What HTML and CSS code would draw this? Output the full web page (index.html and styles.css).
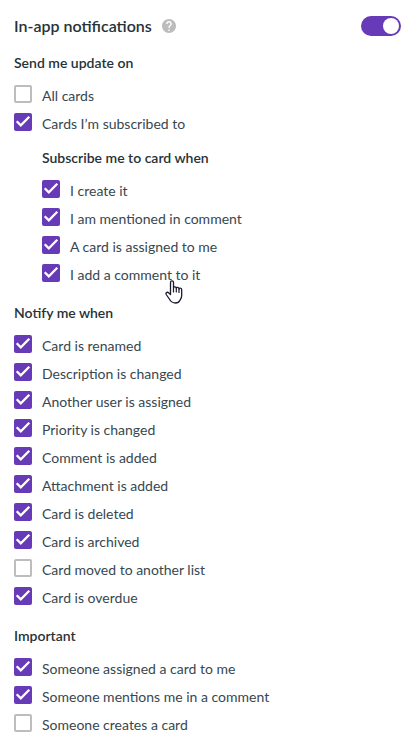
FILE: index.html
```html
<!DOCTYPE html>
<html lang="en">
<head>
    <meta charset="UTF-8">
    <meta name="viewport" content="width=device-width, initial-scale=1.0">
    <title>In-app notifications</title>
    <link rel="stylesheet" href="styles.css">
</head>
<body>
    <form class="settings">
        <div class="header">
            <h1><label for="inApp">In-app notifications</label></h1>
            <button type="button" class="help" aria-label="Help">
                <svg width="14" height="14" viewBox="2 2 20 20">
                    <path fill="currentColor" d="M12 2C6.48 2 2 6.48 2 12s4.48 10 10 10 10-4.48 10-10S17.52 2 12 2zm1 17h-2v-2h2v2zm2.07-7.75l-.9.92C13.45 12.9 13 13.5 13 15h-2v-.5c0-1.1.45-2.1 1.17-2.83l1.24-1.26c.37-.36.59-.86.59-1.41 0-1.1-.9-2-2-2s-2 .9-2 2H8c0-2.21 1.79-4 4-4s4 1.79 4 4c0 .88-.36 1.68-.93 2.25z"/>
                </svg>
            </button>
            <input type="checkbox" role="switch" class="switch" id="inApp" checked>
        </div>

        <section>
            <h2>Send me update on</h2>
            <label class="option"><input type="checkbox"><span>All cards</span></label>
            <label class="option"><input type="checkbox" checked><span>Cards I’m subscribed to</span></label>

            <div class="nested">
                <h2>Subscribe me to card when</h2>
                <label class="option"><input type="checkbox" checked><span>I create it</span></label>
                <label class="option"><input type="checkbox" checked><span>I am mentioned in comment</span></label>
                <label class="option"><input type="checkbox" checked><span>A card is assigned to me</span></label>
                <label class="option hovered">
                    <input type="checkbox" checked><span>I add a comment to it</span>
                    <svg class="cursor" width="18" height="24" viewBox="0 0 18 24">
                        <path fill="#fff" stroke="#1b1b2b" stroke-width="1.3" stroke-linejoin="round" d="M5.5 14.5V2.5C5.5 .4 8.500 .4 8.500 2.500V8C8.500 6.300 11.300 6.400 11.300 8.300C11.300 6.900 14 7 14 8.900C14 7.700 16.700 7.800 16.700 9.800V15.500C16.700 18 15.500 19 14.800 20.500C14 22.300 12.500 23 10.500 23C7.500 23 6 21.800 4.700 19.500L1.200 14.500C.3 12.900 2.200 11.600 3.600 12.800Z"/>
                        <path fill="none" stroke="#1b1b2b" stroke-width="1.2" stroke-linecap="round" d="M8.5 8V12M11.3 8.5V12M14 9.2V12.5"/>
                    </svg>
                </label>
            </div>
        </section>

        <section>
            <h2>Notify me when</h2>
            <label class="option"><input type="checkbox" checked><span>Card is renamed</span></label>
            <label class="option"><input type="checkbox" checked><span>Description is changed</span></label>
            <label class="option"><input type="checkbox" checked><span>Another user is assigned</span></label>
            <label class="option"><input type="checkbox" checked><span>Priority is changed</span></label>
            <label class="option"><input type="checkbox" checked><span>Comment is added</span></label>
            <label class="option"><input type="checkbox" checked><span>Attachment is added</span></label>
            <label class="option"><input type="checkbox" checked><span>Card is deleted</span></label>
            <label class="option"><input type="checkbox" checked><span>Card is archived</span></label>
            <label class="option"><input type="checkbox"><span>Card moved to another list</span></label>
            <label class="option"><input type="checkbox" checked><span>Card is overdue</span></label>
        </section>

        <section>
            <h2>Important</h2>
            <label class="option"><input type="checkbox" checked><span>Someone assigned a card to me</span></label>
            <label class="option"><input type="checkbox" checked><span>Someone mentions me in a comment</span></label>
            <label class="option"><input type="checkbox"><span>Someone creates a card</span></label>
        </section>
    </form>
</body>
</html>
```
FILE: styles.css
```css
body {
    margin: 0;
    background-color: #fff;
    color: #263238;
    font-family: Lato, sans-serif;
    font-size: 14px;
    line-height: 20px;
}

.settings {
    padding: 16px 15px 8px 14px;
}

.header {
    display: flex;
    align-items: center;
    margin-bottom: 17px;
}

h1 {
    margin: 0;
    font-size: 16px;
    font-weight: 600;
    line-height: 20px;
}

h2 {
    margin: 0 0 7px;
    font-size: 14px;
    font-weight: 600;
    line-height: 20px;
}

section + section {
    margin-top: 16px;
}

.help {
    display: flex;
    margin-left: 10px;
    padding: 0;
    border: none;
    background: none;
    color: #bdbdbd;
    cursor: pointer;
}

/* On/off switch */
.switch {
    appearance: none;
    box-sizing: border-box;
    width: 40px;
    height: 20px;
    margin: 0 0 0 auto;
    padding: 2px;
    border-radius: 10px;
    background-color: #bdbdbd;
    cursor: pointer;
}

.switch::before {
    content: "";
    display: block;
    width: 16px;
    height: 16px;
    border-radius: 50%;
    background-color: #fff;
}

.switch:checked {
    background-color: #673ab7;
}

.switch:checked::before {
    margin-left: auto;
}

/* Checkbox rows */
.option {
    display: flex;
    align-items: center;
    gap: 10px;
    height: 28px;
    color: #37474f;
    cursor: pointer;
}

.option span {
    padding-top: 4px;
}

.option input {
    appearance: none;
    box-sizing: border-box;
    width: 18px;
    height: 18px;
    margin: 0;
    border: 2px solid #bdbdbd;
    border-radius: 2px;
    cursor: pointer;
}

.option input:checked {
    border: none;
    background: #673ab7 url("data:image/svg+xml,%3Csvg xmlns='http://www.w3.org/2000/svg' viewBox='0 0 18 18'%3E%3Cpath fill='none' stroke='white' stroke-width='2.3' d='M2.7 8.2L6.8 12.3L15.3 3.8'/%3E%3C/svg%3E");
}

.nested {
    margin: 12px 0 0 28px;
}

.hovered {
    position: relative;
}

.cursor {
    position: absolute;
    left: 123px;
    top: 21px;
}
```
